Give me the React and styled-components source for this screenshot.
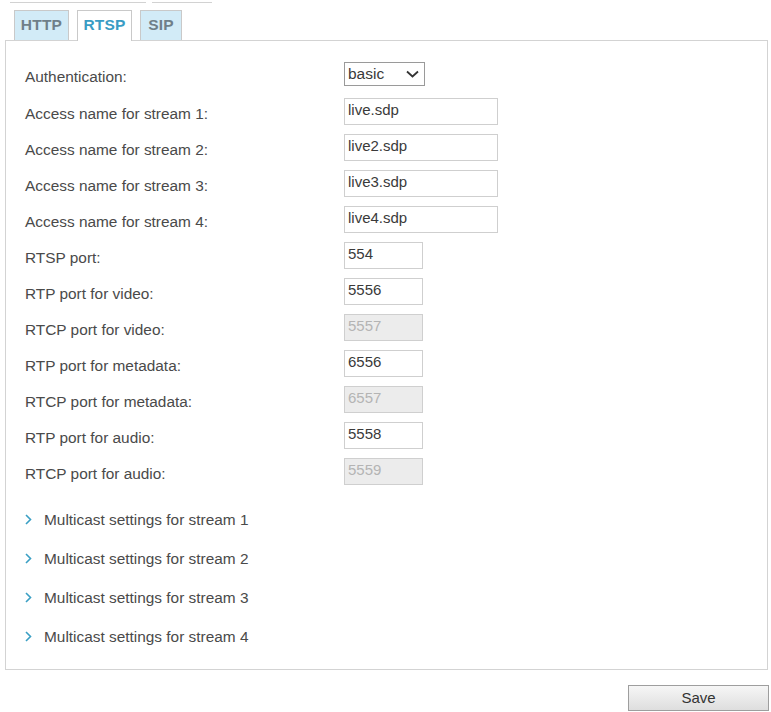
import React from 'react'
import styled, { createGlobalStyle } from 'styled-components'

const GlobalStyle = createGlobalStyle`
  html, body {
    margin: 0;
    padding: 0;
    background: #fff;
  }
  body {
    font-family: "Liberation Sans", Arial, sans-serif;
  }
`

const Page = styled.div`
  width: 771px;
  height: 712px;
  overflow: hidden;
`

const TopStrip = styled.div`
  display: flex;
  gap: 6px;
  height: 10px;
  box-sizing: border-box;
  padding: 2px 0 0 10px;
`

const StripLine = styled.div`
  width: ${p => p.w}px;
  height: 1px;
  background: #d2d2d2;
`

const TabBar = styled.div`
  position: relative;
  z-index: 1;
  display: flex;
  align-items: flex-start;
  gap: 8px;
  height: 31px;
  margin-bottom: -1px;
  padding-left: 14px;
`

const Tab = styled.div`
  width: ${p => p.w}px;
  height: ${p => (p.active ? 31 : 30)}px;
  box-sizing: border-box;
  display: flex;
  align-items: center;
  justify-content: center;
  padding-bottom: ${p => (p.active ? 2 : 1)}px;
  border: 1px solid #c9c9c9;
  border-bottom: none;
  background: ${p => (p.active ? '#fff' : '#d2ebf7')};
  color: ${p => (p.active ? '#3a9cc4' : '#6f7f89')};
  font-size: 15.5px;
  font-weight: bold;
  letter-spacing: 0.2px;
`

const Panel = styled.div`
  margin-left: 5px;
  width: 763px;
  box-sizing: border-box;
  border: 1px solid #d3d3d3;
  padding: 14px 0 13px 19px;
`

const FieldRow = styled.div`
  display: flex;
  align-items: center;
  height: ${p => p.h || 36}px;
`

const Label = styled.div`
  width: 319px;
  padding-top: 6px;
  font-size: 15.4px;
  color: #4a4a4a;
`

const TextBox = styled.input`
  width: ${p => p.w}px;
  height: 27px;
  box-sizing: border-box;
  margin: 0;
  padding: 0 3px 3px;
  border: 1px solid #cfcfcf;
  background: ${p => (p.disabled ? '#ececec' : '#fff')};
  color: ${p => (p.disabled ? '#b4b4b4' : '#3a3a3a')};
  font-family: "Liberation Sans", Arial, sans-serif;
  font-size: 15px;
  outline: none;
  &:disabled {
    -webkit-text-fill-color: #b4b4b4;
    opacity: 1;
  }
`

const SelectWrap = styled.div`
  position: relative;
  width: 81px;
  height: 24px;
`

const Select = styled.select`
  appearance: none;
  width: 100%;
  height: 100%;
  box-sizing: border-box;
  margin: 0;
  padding: 0 3px 2px;
  border: 1px solid #9a9a9a;
  border-radius: 0;
  background: #fff;
  color: #3a3a3a;
  font-family: "Liberation Sans", Arial, sans-serif;
  font-size: 15.5px;
  outline: none;
`

const Chevron = styled.svg`
  position: absolute;
  right: 6px;
  top: 8px;
  pointer-events: none;
`

const MulticastList = styled.div`
  margin-top: 11px;
`

const MulticastRow = styled.div`
  display: flex;
  align-items: center;
  height: 39px;
  font-size: 15.4px;
  color: #4a4a4a;
  gap: 12px;
`

const SaveBar = styled.div`
  display: flex;
  justify-content: flex-end;
  padding: 15px 2px 0 0;
`

const SaveButton = styled.button`
  width: 141px;
  height: 26px;
  box-sizing: border-box;
  border: 1px solid #9e9e9e;
  background: linear-gradient(#f6f6f6, #dedede);
  color: #333;
  font-family: "Liberation Sans", Arial, sans-serif;
  font-size: 15px;
  padding: 0 0 1px;
`

const streams = ['live.sdp', 'live2.sdp', 'live3.sdp', 'live4.sdp']

const ports = [
  { label: 'RTSP port:', value: '554' },
  { label: 'RTP port for video:', value: '5556' },
  { label: 'RTCP port for video:', value: '5557', disabled: true },
  { label: 'RTP port for metadata:', value: '6556' },
  { label: 'RTCP port for metadata:', value: '6557', disabled: true },
  { label: 'RTP port for audio:', value: '5558' },
  { label: 'RTCP port for audio:', value: '5559', disabled: true },
]

const Arrow = () => (
  <svg width="7" height="11" viewBox="0 0 7 11">
    <polyline points="1,1 5.5,5.5 1,10" fill="none" stroke="#3a9fc4" strokeWidth="1.6" />
  </svg>
)

export default function App() {
  return (
    <Page>
      <GlobalStyle />
      <TopStrip>
        <StripLine w={136} />
        <StripLine w={60} />
      </TopStrip>
      <TabBar>
        <Tab w={55}>HTTP</Tab>
        <Tab w={55} active>RTSP</Tab>
        <Tab w={42}>SIP</Tab>
      </TabBar>
      <Panel>
        <FieldRow h={38}>
          <Label>Authentication:</Label>
          <SelectWrap>
            <Select defaultValue="basic">
              <option value="basic">basic</option>
              <option value="digest">digest</option>
              <option value="disable">disable</option>
            </Select>
            <Chevron width="13" height="8" viewBox="0 0 13 8">
              <polyline points="1,1.5 6.5,6.5 12,1.5" fill="none" stroke="#333" strokeWidth="1.8" />
            </Chevron>
          </SelectWrap>
        </FieldRow>
        {streams.map((s, i) => (
          <FieldRow key={s}>
            <Label>Access name for stream {i + 1}:</Label>
            <TextBox w={154} defaultValue={s} />
          </FieldRow>
        ))}
        {ports.map(p => (
          <FieldRow key={p.label}>
            <Label>{p.label}</Label>
            <TextBox w={79} defaultValue={p.value} disabled={p.disabled} />
          </FieldRow>
        ))}
        <MulticastList>
          {[1, 2, 3, 4].map(n => (
            <MulticastRow key={n}>
              <Arrow />
              <span>Multicast settings for stream {n}</span>
            </MulticastRow>
          ))}
        </MulticastList>
      </Panel>
      <SaveBar>
        <SaveButton>Save</SaveButton>
      </SaveBar>
    </Page>
  )
}
